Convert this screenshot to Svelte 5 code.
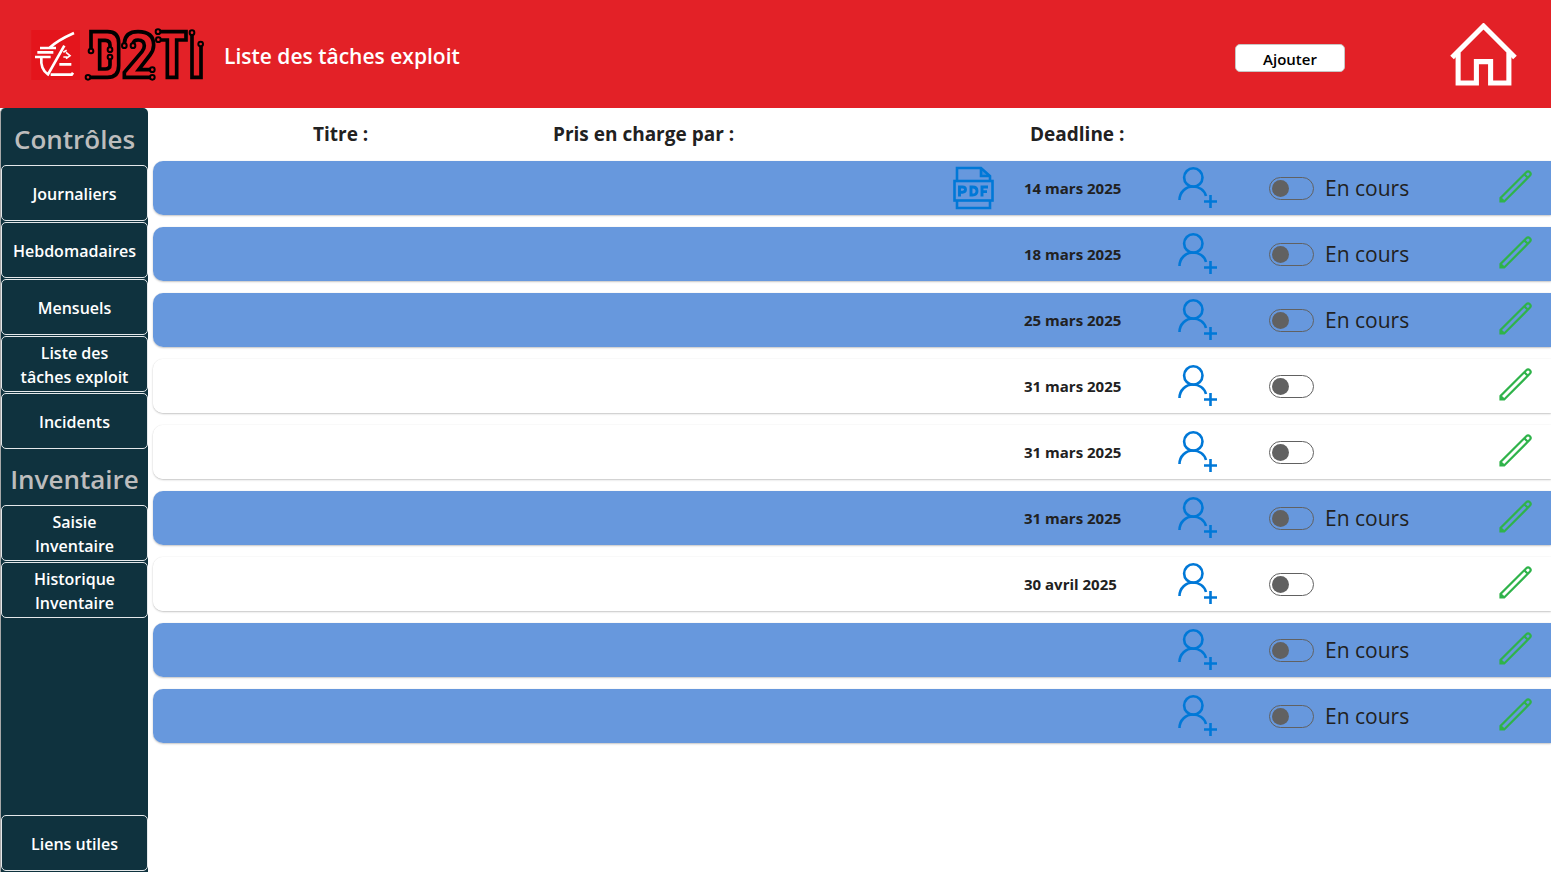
<script>
  const controls = ['Journaliers', 'Hebdomadaires', 'Mensuels', 'Liste des tâches exploit', 'Incidents'];
  const inventory = ['Saisie Inventaire', 'Historique Inventaire'];

  let tasks = $state([
    { deadline: '14 mars 2025', active: true, pdf: true },
    { deadline: '18 mars 2025', active: true },
    { deadline: '25 mars 2025', active: true },
    { deadline: '31 mars 2025', active: false },
    { deadline: '31 mars 2025', active: false },
    { deadline: '31 mars 2025', active: true },
    { deadline: '30 avril 2025', active: false },
    { deadline: '', active: true },
    { deadline: '', active: true }
  ].map((t) => ({ ...t, done: false })));
</script>

<div class="page">
  <header>
    <svg class="logo" viewBox="30 36 525 165" aria-hidden="true">
      <rect x="34" y="45" width="146" height="150" fill="#e4151c" />
      <g fill="none" stroke="#fff" stroke-width="8">
        <path d="M162 54C135 66 108 80 88 99M60 99H108M52 112H100M45 126H92" />
        <path d="M64 128C62 150 68 168 84 178L133 92" />
        <path d="M130 112L140 106M138 112L150 122L138 131M130 126H142" stroke-width="5" />
        <path d="M118 148H154M92 179H155L159 173" />
      </g>
      <g fill="none" stroke="#000" stroke-width="11">
        <path d="M213 101V50H262Q296 50 296 84V152Q296 187 262 187H211" />
        <path d="M270 98V90Q270 76 256 76H239V162H256Q270 162 270 150V132" />
        <path d="M313 85Q315 50 354 50Q401 50 401 90Q401 106 390 120L356 164H390" />
        <path d="M339 86Q341 75 354 75Q373 75 373 92Q373 101 366 110L313 172V187H390" />
        <path d="M421 50H498V75H470V187H442V75H421" />
        <path d="M516 60V187H543V94" />
      </g>
      <g fill="#e32127" stroke="#000" stroke-width="6">
        <circle cx="213" cy="108" r="7" /><circle cx="204" cy="187" r="7" />
        <circle cx="270" cy="104" r="7" /><circle cx="270" cy="126" r="7" />
        <circle cx="313" cy="92" r="7" /><circle cx="339" cy="92" r="7" />
        <circle cx="397" cy="164" r="7" /><circle cx="397" cy="187" r="7" />
        <circle cx="414" cy="50" r="7" /><circle cx="415" cy="74" r="7" />
        <circle cx="516" cy="53" r="7" /><circle cx="542" cy="87" r="7" />
      </g>
    </svg>
    <h1>Liste des tâches exploit</h1>
    <button class="add" type="button">Ajouter</button>
    <button class="home" type="button" aria-label="Accueil">
      <svg viewBox="0 0 66 62" fill="none" stroke="#fff" stroke-width="5">
        <path d="M2 34L33 3L64 34" />
        <path d="M8 29V59H26V38H40V59H58V29" />
      </svg>
    </button>
  </header>

  <div class="body">
    <nav>
      <h2>Contrôles</h2>
      <div class="group">
        {#each controls as label}<button type="button"><span>{label}</span></button>{/each}
      </div>
      <h2>Inventaire</h2>
      <div class="group">
        {#each inventory as label}<button type="button"><span>{label}</span></button>{/each}
      </div>
      <div class="group last"><button type="button"><span>Liens utiles</span></button></div>
    </nav>

    <main>
      <table>
        <colgroup>
          <col /><col /><col class="c-file" /><col class="c-date" /><col class="c-user" /><col class="c-state" /><col class="c-edit" />
        </colgroup>
        <thead>
          <tr>
            <th class="title">Titre :</th>
            <th>Pris en charge par :</th>
            <td></td>
            <th class="due">Deadline :</th>
            <td></td>
            <td></td>
            <td></td>
          </tr>
        </thead>
        <tbody>
          {#each tasks as task}
            <tr class:active={task.active}>
              <td></td>
              <td></td>
              <td>
                {#if task.pdf}
                  <button class="icon" type="button" aria-label="PDF">
                    <svg width="41" height="44" viewBox="0 0 41 44" fill="none" stroke="#0078d7" stroke-width="2.6">
                      <path d="M4 14V2H28L37 10V14M28 2V10H37M4 35V42H37V35" />
                      <path d="M28 2L37 10H28Z" fill="#0078d7" fill-opacity=".4" stroke="none" />
                      <rect x="1.5" y="15" width="38" height="19.5" />
                      <path d="M6.5 30.5V21H9.5Q12.5 21 12.5 23.6T9.5 26.2H6.5M18 21V29H19.5Q24 29 24 25T19.5 21ZM29 30.5V21H35M29 25.6H34" stroke-width="2.9" />
                    </svg>
                  </button>
                {/if}
              </td>
              <td class="date">{task.deadline}</td>
              <td>
                <button class="icon" type="button" aria-label="Attribuer">
                  <svg width="40" height="44" viewBox="0 0 40 44" fill="none" stroke="#0078d7" stroke-width="2.6">
                    <circle cx="15.3" cy="11.5" r="9.2" />
                    <path d="M1.5 34C1.5 26 8 20.5 15 20.5C21 20.5 26.5 24 28 30M26 35.5H39M32.5 29V42" />
                  </svg>
                </button>
              </td>
              <td>
                <label>
                  <input type="checkbox" role="switch" aria-label="Terminée" bind:checked={task.done} />
                  {#if task.active}<span>En cours</span>{/if}
                </label>
              </td>
              <td>
                <button class="icon" type="button" aria-label="Modifier">
                  <svg width="33" height="38" viewBox="0 0 33 38" fill="none" stroke="#2fb34a" stroke-width="2.2">
                    <path d="M1.5 32.5V29L27.3 3.2A2.5 2.5 0 0 1 30.8 6.8L5.2 32.5ZM1.5 29L5.2 32.5M25.3 5.2L28.8 8.8" />
                  </svg>
                </button>
              </td>
            </tr>
          {/each}
        </tbody>
      </table>
    </main>
  </div>
</div>

<style>
  :global(body) {
    margin: 0;
    background: #fff;
  }
  .page {
    display: flex;
    flex-direction: column;
    min-height: 100vh;
    font-family: 'Open Sans', 'Noto Sans', sans-serif;
    color: #212121;
  }
  button {
    font: inherit;
    cursor: pointer;
  }
  svg {
    display: block;
  }
  header {
    display: flex;
    align-items: center;
    box-sizing: border-box;
    height: 108px;
    padding: 0 34px 0 30px;
    background: #e32127;
  }
  .logo {
    width: 175px;
    height: 55px;
  }
  h1 {
    margin: 0 auto 0 19px;
    padding-top: 4px;
    font-size: 21px;
    font-weight: 600;
    line-height: 30px;
    color: #fff;
  }
  .add {
    width: 110px;
    height: 28px;
    margin: 8px 105px 0 0;
    padding: 2px 0 0;
    border: 1px solid #c8c6c4;
    border-radius: 5px;
    background: #fff;
    color: #000;
    font-size: 15px;
    font-weight: 600;
    line-height: 24px;
  }
  .home {
    padding: 0;
    border: 0;
    background: none;
  }
  .home svg {
    width: 67px;
    height: 63px;
  }
  .body {
    display: flex;
    flex: 1;
  }
  nav {
    display: flex;
    flex-direction: column;
    flex: none;
    box-sizing: border-box;
    width: 148px;
    padding: 1px 0;
    border-left: 1px solid #a8a8a8;
    border-radius: 5px 5px 0 0;
    background: #0f323e;
  }
  h2 {
    margin: 0;
    padding-top: 4px;
    box-sizing: border-box;
    height: 56px;
    font-size: 26px;
    font-weight: 600;
    line-height: 52px;
    text-align: center;
    color: #bdbdbd;
  }
  .group {
    display: flex;
    flex-direction: column;
    gap: 1px;
  }
  .last {
    margin-top: auto;
  }
  .group button {
    display: flex;
    align-items: center;
    justify-content: center;
    height: 56px;
    padding: 1px 4px 0;
    border: 1px solid #e4e8ea;
    border-radius: 5px;
    background: #0f323e;
    color: #fff;
    font-size: 16px;
    font-weight: 600;
    line-height: 24px;
    text-align: center;
  }
  .group span {
    width: min-content;
    min-width: 112px;
  }
  main {
    flex: 1;
    min-width: 0;
    padding-left: 5px;
  }
  table {
    width: 100%;
    table-layout: fixed;
    border-collapse: separate;
    border-spacing: 0 12px;
  }
  .c-file { width: 71px; }
  .c-date { width: 154px; }
  .c-user { width: 91px; }
  .c-state { width: 230px; }
  .c-edit { width: 52px; }
  th,
  td {
    padding: 0;
    text-align: left;
    vertical-align: middle;
    white-space: nowrap;
  }
  th {
    height: 29px;
    font-size: 19px;
    font-weight: 700;
    line-height: 29px;
  }
  .title {
    padding-left: 160px;
  }
  .due {
    padding-left: 6px;
  }
  tbody tr {
    border-radius: 10px 0 0 10px;
    box-shadow: 0 0 1px rgba(0, 0, 0, 0.15), 0 1px 2px rgba(0, 0, 0, 0.22);
  }
  tbody td {
    height: 54px;
    background: #fff;
  }
  tbody td:first-child {
    border-radius: 10px 0 0 10px;
  }
  .active td {
    background: #6798dd;
  }
  .date {
    font-size: 15px;
    font-weight: 700;
  }
  .icon {
    display: block;
    padding: 0;
    border: 0;
    background: none;
  }
  label {
    display: flex;
    align-items: center;
    gap: 11px;
    font-size: 21px;
    line-height: 30px;
  }
  input {
    display: flex;
    align-items: center;
    appearance: none;
    box-sizing: border-box;
    width: 45px;
    height: 23px;
    margin: 0;
    padding: 0 2px;
    border: 1px solid #616161;
    border-radius: 12px;
  }
  input::before {
    content: '';
    width: 17px;
    height: 17px;
    border-radius: 50%;
    background: #616161;
  }
  input:checked {
    justify-content: flex-end;
  }
</style>
